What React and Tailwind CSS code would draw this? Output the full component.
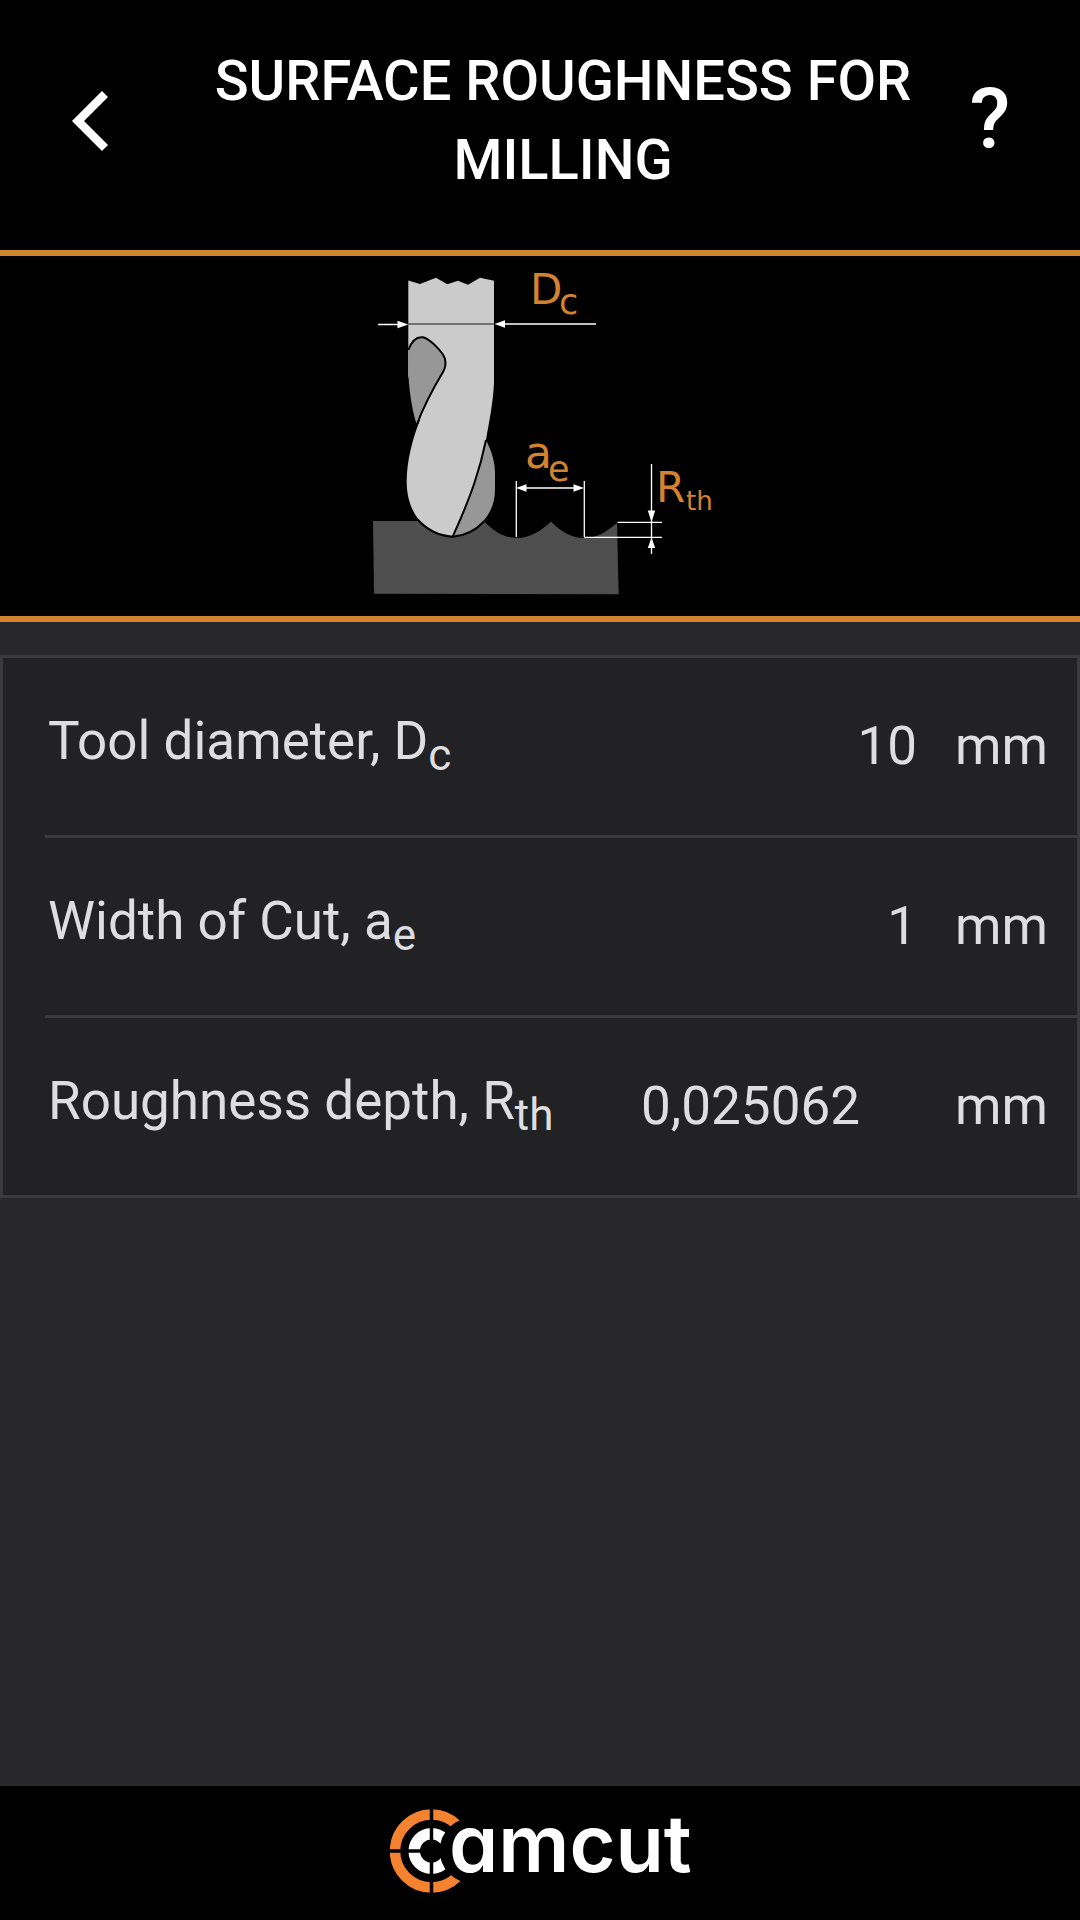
import { useState } from 'react';

const MillingDiagram = () => {
  return (
    <svg viewBox="0 0 360 360" className="h-[360px] w-[360px]" role="img" aria-label="Ball nose cutter on a milled surface">
      {/* workpiece */}
      <path d="M13 265H124C134 276 145 282 157 282C170 282 181 275 191 265.500C201 276 212 282 224 282C237 282 246 276 257 267L258.700 338.300L14 337.700Z" fill="#4e4e4e" />
      {/* cutter */}
      <path d="M126 184C132 196 135 206 135 218V234C135 262 112 279 92.700 280.700Z" fill="#979797" />
      <path d="M48.300 24.500L60 28L76 21.700L87.300 28.300L98 24.700L108 28.700L120 21.700L134 24.700V127C133 148 129 166 126 184C120 213 112 238 92.700 280.700C72 279 47 264 46.700 226C46.700 206 52 184 60 164L48.300 120Z" fill="#cbcbcb" />
      <path d="M48.300 94C52 84 57 80.500 63 81.300C70 83 83 96 85 103C86 108 85.500 112 83 116C74 131 64 149 56.700 169C51 150 47 124 48.300 94Z" fill="#979797" />
      <g fill="none" stroke="#000" strokeWidth="2">
        <path d="M48.300 94C52 84 57 80.500 63 81.300C70 83 83 96 85 103C86 108 85.500 112 83 116C74 131 64 149 56.700 169" />
        <path d="M126 184C120 213 112 238 92.700 280.700" />
        <path d="M57 263C67 274 80 280 92.700 280.700C104 280 115 275 124 265.500" />
      </g>
      {/* dimension lines */}
      <path d="M48 68H134" stroke="#555" strokeWidth="1.300" />
      <g stroke="#fff" strokeWidth="1.300">
        <path d="M18 68.500H40M142 68H236" />
        <path d="M156.300 225V281M224.300 225V281M160 232H220" />
        <path d="M291.500 208V298M257.500 266.300H302M224.300 281.300H302" />
      </g>
      <g fill="#fff">
        <path d="M48.300 68.500L37.500 64.700V72.300ZM134.500 68L145 64.200V71.800Z" />
        <path d="M156 232L166.500 228.200V235.800ZM224 232L213.500 228.200V235.800Z" />
        <path d="M291.500 266L287.800 254.500H295.200ZM291.500 281.500L287.800 292H295.200Z" />
      </g>
      <g fill="#d5822f" fontFamily="DejaVu Sans, sans-serif">
        <text x="170" y="48" fontSize="42">D</text>
        <text x="199" y="58" fontSize="35">c</text>
        <text x="165" y="212" fontSize="44">a</text>
        <text x="188" y="225" fontSize="35">e</text>
        <text x="296" y="246" fontSize="42">R</text>
        <text x="326" y="254" fontSize="26">th</text>
      </g>
    </svg>
  );
};

const Logo = () => {
  return (
    <svg viewBox="0 0 300 134" className="h-[134px] w-[300px]" role="img" aria-label="camcut">
      <circle cx="41.500" cy="65" r="36.500" fill="none" stroke="#f5822f" strokeWidth="10.500" />
      <circle cx="41.500" cy="65" r="17.300" fill="none" stroke="#fff" strokeWidth="11.500" />
      <path d="M41.500 20V110M0 65H34" stroke="#000" strokeWidth="3.500" />
      <circle cx="82.300" cy="64.500" r="32.700" fill="#000" />
      <text x="59" y="86" fontSize="79" fontWeight="600" fontFamily="Inter, sans-serif" fill="#fff" className="[font-feature-settings:'cv11']">amcut</text>
    </svg>
  );
};

const Row = ({ id, name, sub, children }) => {
  return (
    <div className="ml-[42px] flex items-center h-[180px] last:h-[177px] pl-[3px] pr-8 pb-[2px] border-b-[3px] last:border-b-0 border-[#3a3a3c]">
      <label htmlFor={id} className="whitespace-nowrap pb-[10px]">
        {name}, {sub[0]}
        <sub className="text-[44px] leading-none bottom-[-11px]">{sub[1]}</sub>
      </label>
      {children}
      <span className="w-[90px] shrink-0">mm</span>
    </div>
  );
};

const App = () => {
  const [diameter, setDiameter] = useState('10');
  const [width, setWidth] = useState('1');

  // theoretical scallop height left by a ball nose cutter, cut to 6 decimals
  const r = parseFloat(diameter.replace(',', '.')) / 2;
  const half = parseFloat(width.replace(',', '.')) / 2;
  const depth = r - Math.sqrt(r * r - half * half);
  const result = Number.isFinite(depth) ? (Math.floor(depth * 1e6) / 1e6).toFixed(6).replace('.', ',') : '';

  return (
    <div className="min-h-screen flex flex-col bg-[#28282a] text-[#dedee0] text-[53px] leading-[64px] font-[Roboto,sans-serif]">
      <header className="flex items-center justify-between bg-black text-white px-[68px] pt-[42px] pb-[50px] border-b-[6px] border-[#d08430]">
        <button type="button" aria-label="Back" className="w-11 h-16 flex items-center">
          <svg viewBox="0 0 44 64" className="w-11 h-16" fill="none" stroke="#fff" strokeWidth="8.500">
            <path d="M37 5L10 32L37 59" />
          </svg>
        </button>
        <h1 className="flex-1 pl-[94px] pr-12 text-center text-[56px] leading-[79px] font-medium uppercase">Surface roughness for milling</h1>
        <button type="button" aria-label="Help" className="w-11 pb-1 text-[84px] leading-[79px] font-medium">?</button>
      </header>

      <section className="flex justify-center bg-black border-b-[6px] border-[#d5822f]">
        <MillingDiagram />
      </section>

      <main className="flex-1 pt-[33px]">
        <div className="bg-[#222224] border-[3px] border-[#3a3a3c]">
          <Row id="diameter" name="Tool diameter" sub={['D', 'c']}>
            <input id="diameter" type="text" inputMode="decimal" value={diameter} onChange={(e) => setDiameter(e.target.value)} className="flex-1 min-w-0 mr-[38px] bg-transparent text-right outline-none" />
          </Row>
          <Row id="width" name="Width of Cut" sub={['a', 'e']}>
            <input id="width" type="text" inputMode="decimal" value={width} onChange={(e) => setWidth(e.target.value)} className="flex-1 min-w-0 mr-[38px] bg-transparent text-right outline-none" />
          </Row>
          <Row id="depth" name="Roughness depth" sub={['R', 'th']}>
            <output id="depth" className="flex-1 min-w-0 mr-[95px] text-right">{result}</output>
          </Row>
        </div>
      </main>

      <footer className="flex justify-center bg-black">
        <Logo />
      </footer>
    </div>
  );
};

export default App;
